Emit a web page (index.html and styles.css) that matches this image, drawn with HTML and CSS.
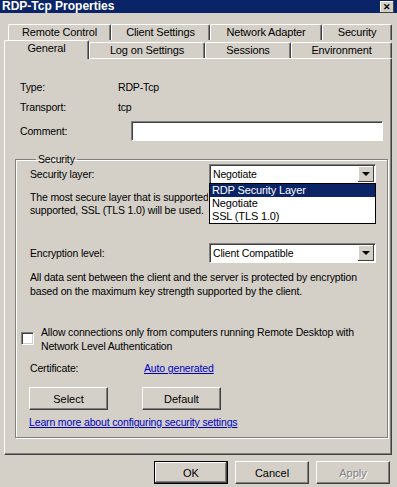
FILE: index.html
```html
<!DOCTYPE html>
<html lang="en">
<head>
  <meta charset="UTF-8">
  <title>RDP-Tcp Properties</title>
  <link rel="stylesheet" href="styles.css">
</head>
<body>
  <div class="titlebar">
    <span class="titulo">RDP-Tcp Properties</span>
    <span class="cerrar">&#x2715;</span>
  </div>

  <div class="tabs">
    <div class="fila fila-1">
      <div class="tab" style="width: 103px">Remote Control</div>
      <div class="tab" style="width: 99px">Client Settings</div>
      <div class="tab" style="width: 112px">Network Adapter</div>
      <div class="tab" style="width: 70px">Security</div>
    </div>
    <div class="fila fila-2">
      <div class="tab activa" style="width: 85px">General</div>
      <div class="tab" style="width: 116px">Log on Settings</div>
      <div class="tab" style="width: 86px">Sessions</div>
      <div class="tab" style="width: 101px">Environment</div>
    </div>
  </div>

  <div class="panel">
    <div class="fila-dato"><span class="etiqueta">Type:</span><span>RDP-Tcp</span></div>
    <div class="fila-dato"><span class="etiqueta">Transport:</span><span>tcp</span></div>
    <div class="fila-comentario"><span class="etiqueta">Comment:</span><div class="campo"></div></div>

    <fieldset class="grupo">
      <legend>Security</legend>

      <div class="fila-opcion desplegable">
        <span>Security layer:</span>
        <div class="combo"><span>Negotiate</span><span class="flecha"></span></div>
        <ul class="lista">
          <li class="marcado">RDP Security Layer</li>
          <li>Negotiate</li>
          <li>SSL (TLS 1.0)</li>
        </ul>
      </div>
      <p class="nota nota-capa">The most secure layer that is supported by the client will be used. If<br>supported, SSL (TLS 1.0) will be used.</p>

      <div class="fila-opcion">
        <span>Encryption level:</span>
        <div class="combo"><span>Client Compatible</span><span class="flecha"></span></div>
      </div>
      <p class="nota nota-cifrado">All data sent between the client and the server is protected by encryption<br>based on the maximum key strength supported by the client.</p>

      <div class="casilla-fila">
        <span class="casilla"></span>
        <span>Allow connections only from computers running Remote Desktop with<br>Network Level Authentication</span>
      </div>

      <div class="fila-certificado">
        <span class="etiqueta-cert">Certificate:</span>
        <a class="enlace" href="#">Auto generated</a>
      </div>

      <div class="botones-grupo">
        <button class="boton">Select</button>
        <button class="boton">Default</button>
      </div>
      <a class="enlace aprender" href="#">Learn more about configuring security settings</a>
    </fieldset>
  </div>

  <div class="pie">
    <button class="boton pie-boton defecto">OK</button>
    <button class="boton pie-boton">Cancel</button>
    <button class="boton pie-boton apagado">Apply</button>
  </div>
</body>
</html>
```

FILE: styles.css
```css
body {
  margin: 0;
  width: 397px;
  height: 487px;
  overflow: hidden;
  background: #d4d0c8;
  font-family: "Liberation Sans", Arial, sans-serif;
  font-size: 10.5px;
  letter-spacing: -0.15px;
  color: #000;
}

.titlebar {
  height: 13px;
  background: #0b2467;
  color: #fff;
  display: flex;
  align-items: center;
  justify-content: space-between;
  padding: 0 3px 0 2px;
}
.titulo { font-weight: bold; font-size: 12px; line-height: 13px; letter-spacing: 0; }
.cerrar {
  width: 14px;
  height: 12px;
  background: #d4d0c8;
  color: #000;
  font-size: 9px;
  font-weight: bold;
  line-height: 12px;
  text-align: center;
  box-shadow: inset -1px -1px 0 #404040, inset 1px 1px 0 #fff;
}

.tabs { padding-top: 11px; }
.fila { display: flex; }
.fila-1 { padding-left: 8px; height: 16px; }
.fila-2 { padding-left: 4px; height: 18px; align-items: flex-end; }
.tab {
  box-sizing: border-box;
  height: 16px;
  line-height: 15px;
  text-align: center;
  font-size: 11px;
  border-top: 1px solid #fff;
  border-left: 1px solid #fff;
  border-right: 1px solid #404040;
  box-shadow: inset -1px 0 0 #808080;
  border-radius: 2px 2px 0 0;
}
.tab.activa {
  height: 19px;
  margin-bottom: -1px;
  background: #d4d0c8;
  position: relative;
  z-index: 1;
}

.panel {
  box-sizing: border-box;
  margin-left: 4px;
  width: 388px;
  height: 397px;
  border-top: 1px solid #fff;
  border-left: 1px solid #fff;
  border-right: 1px solid #404040;
  border-bottom: 1px solid #404040;
  box-shadow: inset -1px -1px 0 #808080;
  padding: 18px 3px 0 10px;
}

.fila-dato { display: flex; height: 20px; line-height: 20px; padding-left: 5px; }
.etiqueta { width: 98px; }
.fila-comentario { display: flex; align-items: center; height: 20px; padding-left: 5px; margin-top: 4px; }
.campo {
  box-sizing: border-box;
  margin-left: 13px;
  width: 252px;
  height: 20px;
  background: #fff;
  border-top: 1px solid #808080;
  border-left: 1px solid #808080;
  border-right: 1px solid #fff;
  border-bottom: 1px solid #fff;
  box-shadow: inset 1px 1px 0 #404040;
}

.grupo {
  margin: 12px 0 0;
  box-sizing: border-box;
  width: 373px;
  height: 285px;
  padding: 0 11px 0 14px;
  border: 1px solid #808080;
  box-shadow: 1px 1px 0 #fff, inset 1px 1px 0 #fff;
}
.grupo legend { padding: 0 2px; margin-left: 6px; line-height: 12px; }

.fila-opcion {
  display: flex;
  align-items: center;
  justify-content: space-between;
  height: 20px;
}
.desplegable { position: relative; margin-top: -1px; }
.combo {
  box-sizing: border-box;
  width: 167px;
  height: 20px;
  background: #fff;
  display: flex;
  align-items: center;
  justify-content: space-between;
  padding-left: 3px;
  border-top: 1px solid #808080;
  border-left: 1px solid #808080;
  border-right: 1px solid #fff;
  border-bottom: 1px solid #fff;
  box-shadow: inset 1px 1px 0 #404040;
}
.flecha {
  width: 16px;
  height: 16px;
  margin-right: 1px;
  background: #d4d0c8;
  box-shadow: inset -1px -1px 0 #404040, inset 1px 1px 0 #fff;
  display: flex;
  align-items: center;
  justify-content: center;
}
.flecha::after {
  content: "";
  border-left: 4px solid transparent;
  border-right: 4px solid transparent;
  border-top: 4px solid #000;
}

.lista {
  position: absolute;
  z-index: 2;
  right: 0;
  top: 19px;
  width: 167px;
  box-sizing: border-box;
  margin: 0;
  padding: 0;
  list-style: none;
  background: #fff;
  border: 1px solid #000;
  font-size: 11px;
}
.lista li { height: 13px; line-height: 13px; padding-left: 2px; }
.lista .marcado { background: #0b2467; color: #fff; }

.nota { margin: 0; line-height: 13px; white-space: nowrap; }
.nota-capa { margin: 7px 0 26px; width: 178px; overflow: hidden; }
.nota-cifrado { margin: 7px 0 27px; line-height: 14px; }

.casilla-fila { display: flex; gap: 7px; line-height: 14px; margin-left: -9px; white-space: nowrap; }
.casilla {
  flex: none;
  box-sizing: border-box;
  width: 13px;
  height: 13px;
  margin-top: 7px;
  background: #fff;
  border-top: 1px solid #808080;
  border-left: 1px solid #808080;
  border-right: 1px solid #fff;
  border-bottom: 1px solid #fff;
  box-shadow: inset 1px 1px 0 #404040, inset -1px -1px 0 #d4d0c8;
}

.fila-certificado { display: flex; height: 14px; line-height: 14px; margin-top: 8px; }
.etiqueta-cert { width: 114px; }
.enlace { color: #0000c0; text-decoration: underline; }

.botones-grupo { display: flex; gap: 34px; margin: 12px 0 0 -1px; }
.boton {
  box-sizing: border-box;
  width: 79px;
  height: 23px;
  padding: 0;
  font: inherit;
  font-size: 11px;
  letter-spacing: 0;
  color: #000;
  background: #d4d0c8;
  border-top: 1px solid #fff;
  border-left: 1px solid #fff;
  border-right: 1px solid #404040;
  border-bottom: 1px solid #404040;
  box-shadow: inset -1px -1px 0 #808080;
}
.aprender { display: block; margin: 5px 0 0 -1px; line-height: 14px; white-space: nowrap; }

.pie { display: flex; gap: 7px; justify-content: flex-end; padding: 6px 7px 0 0; }
.pie-boton { width: 74px; height: 23px; }
.defecto { border: 1px solid #000; box-shadow: inset -1px -1px 0 #404040, inset 1px 1px 0 #fff, inset -2px -2px 0 #808080; }
.apagado { color: #808080; text-shadow: 1px 1px 0 #fff; }
```
